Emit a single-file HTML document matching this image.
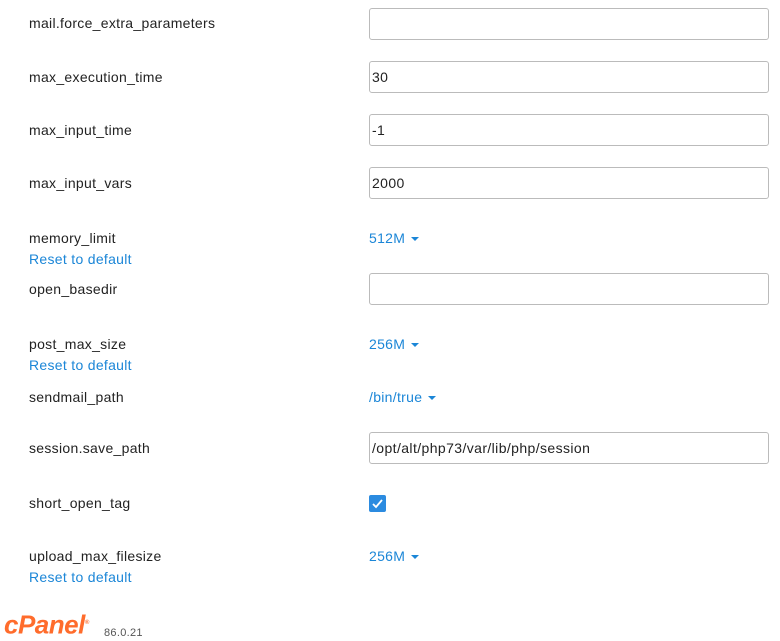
<!DOCTYPE html>
<html><head><style>
body{margin:0;width:780px;height:641px;background:#fff;font-family:"Liberation Sans",sans-serif;font-size:14px;letter-spacing:0.3px;color:#222;position:relative;overflow:hidden}
.a{position:absolute;white-space:nowrap;line-height:16px}
.l{left:29px}
.in{position:absolute;left:369px;border:1px solid #bbb;border-radius:3px;font-size:14px;letter-spacing:0.4px;line-height:30px;padding-left:2px;box-sizing:border-box;width:400px;height:32px}
.b{color:#1b86d7}
.dd{left:369px;color:#1b86d7}
.dd:after{content:"";display:inline-block;margin-left:6px;vertical-align:middle;border-left:4px solid transparent;border-right:4px solid transparent;border-top:4px solid #1b86d7}
</style></head><body>
<div class="a l" style="top:15px">mail.force_extra_parameters</div><div class="in" style="top:8px"></div>
<div class="a l" style="top:69px">max_execution_time</div><div class="in" style="top:61px">30</div>
<div class="a l" style="top:122px">max_input_time</div><div class="in" style="top:114px">-1</div>
<div class="a l" style="top:175px">max_input_vars</div><div class="in" style="top:167px">2000</div>
<div class="a l" style="top:230px">memory_limit</div><div class="a dd" style="top:230px">512M</div>
<div class="a l b" style="top:251px">Reset to default</div>
<div class="a l" style="top:281px">open_basedir</div><div class="in" style="top:273px"></div>
<div class="a l" style="top:336px">post_max_size</div><div class="a dd" style="top:336px">256M</div>
<div class="a l b" style="top:357px">Reset to default</div>
<div class="a l" style="top:389px">sendmail_path</div><div class="a dd" style="top:389px">/bin/true</div>
<div class="a l" style="top:440px">session.save_path</div><div class="in" style="top:432px">/opt/alt/php73/var/lib/php/session</div>
<div class="a l" style="top:495px">short_open_tag</div>
<div style="position:absolute;left:369px;top:495px;width:17px;height:17px;background:#2b8be0;border-radius:2px"><svg width="17" height="17"><path d="M4 9l3 3 6-7" stroke="#fff" stroke-width="1.8" fill="none"/></svg></div>
<div class="a l" style="top:548px">upload_max_filesize</div><div class="a dd" style="top:548px">256M</div>
<div class="a l b" style="top:569px">Reset to default</div>
<div class="a" style="left:4px;top:609px;font-size:26px;line-height:28px;font-style:italic;font-weight:bold;color:#ff6c2c;letter-spacing:-0.5px">cPanel<sup style="font-size:6px">®</sup></div>
<div class="a" style="left:104px;top:625px;font-size:11px;color:#555">86.0.21</div>
</body></html>
